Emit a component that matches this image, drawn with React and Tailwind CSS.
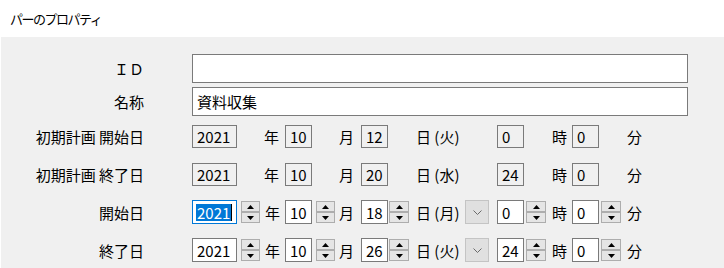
import React from "react";

const FONT = "font-['Noto_Sans_CJK_JP','Noto_Sans',sans-serif]";

function Box({ value, w }) {
  return (
    <div className={`${w} h-[23px] shrink-0 border border-[#7a7a7a] bg-[#f0f0f0] flex items-center pl-[4px] text-[15px] leading-none text-black`}>
      {value}
    </div>
  );
}

function Input({ value, w, focused }) {
  return (
    <div
      className={`${w} h-[24px] shrink-0 border ${
        focused ? "border-[#0078d7]" : "border-[#7a7a7a]"
      } bg-white flex items-center pl-[3px] text-[15px] leading-none text-black`}
    >
      {focused ? (
        <span className="flex items-center">
          <span className="bg-[#0078d7] text-white h-[17px] flex items-center px-[1px]">{value}</span>
          <span className="w-[1px] h-[17px] bg-black" />
        </span>
      ) : (
        <span className="pl-[1px]">{value}</span>
      )}
    </div>
  );
}

function Spinner({ className = "" }) {
  return (
    <div className={`flex flex-col w-[19px] h-[22px] shrink-0 ${className}`}>
      <div className="h-[11px] bg-[#e5e5e5] border border-[#adadad] flex items-center justify-center">
        <svg width="7" height="4" viewBox="0 0 7 4">
          <path d="M0 4 L3.5 0 L7 4 Z" fill="#000" />
        </svg>
      </div>
      <div className="h-[11px] bg-[#e5e5e5] border border-[#adadad] flex items-center justify-center">
        <svg width="7" height="4" viewBox="0 0 7 4">
          <path d="M0 0 L3.5 4 L7 0 Z" fill="#000" />
        </svg>
      </div>
    </div>
  );
}

function Dropdown() {
  return (
    <div className="w-[24px] h-[24px] shrink-0 bg-[#e0e0e0] border border-[#c4c4c4] flex items-center justify-center">
      <svg width="9" height="5" viewBox="0 0 9 5">
        <path d="M0.5 0.5 L4.5 4.5 L8.5 0.5" fill="none" stroke="#6a6a6a" strokeWidth="1" />
      </svg>
    </div>
  );
}

function Label({ children }) {
  return (
    <div className="w-[143px] shrink-0 text-right text-[15px] leading-none text-black whitespace-nowrap">
      {children}
    </div>
  );
}

function T({ children, cls }) {
  return (
    <div className={`${cls} shrink-0 text-[15px] leading-none text-black whitespace-nowrap`}>{children}</div>
  );
}

function PlanRow({ label, y, m, d, dow, h, mi }) {
  return (
    <div className="h-[24px] flex items-center">
      <Label>{label}</Label>
      <div className="ml-[48px] flex items-center">
        <Box value={y} w="w-[45px]" />
        <T cls="w-[48px] pl-[27px]">年</T>
        <Box value={m} w="w-[27px]" />
        <T cls="w-[49px] pl-[27px]">月</T>
        <Box value={d} w="w-[27px]" />
        <T cls="w-[109px] pl-[28px]">日 ({dow})</T>
        <Box value={h} w="w-[27px]" />
        <T cls="w-[48px] pl-[28px]">時</T>
        <Box value={mi} w="w-[27px]" />
        <T cls="pl-[28px]">分</T>
      </div>
    </div>
  );
}

function EditRow({ label, y, m, d, dow, h, mi, focused }) {
  return (
    <div className="h-[24px] flex items-center">
      <Label>{label}</Label>
      <div className="ml-[48px] flex items-center">
        <Input value={y} w="w-[45px]" focused={focused} />
        <Spinner className="ml-[4px]" />
        <T cls="w-[25px] pl-[5px]">年</T>
        <Input value={m} w="w-[27px]" />
        <Spinner className="ml-[4px]" />
        <T cls="w-[26px] pl-[4px]">月</T>
        <Input value={d} w="w-[27px]" />
        <Spinner className="ml-[1px] w-[20px]" />
        <T cls="w-[56px] pl-[7px]">日 ({dow})</T>
        <Dropdown />
        <div className="ml-[8px]" />
        <Input value={h} w="w-[27px]" />
        <Spinner className="ml-[2px] w-[20px]" />
        <T cls="w-[26px] pl-[6px]">時</T>
        <Input value={mi} w="w-[27px]" />
        <Spinner className="ml-[2px] w-[20px]" />
        <T cls="pl-[6px]">分</T>
      </div>
    </div>
  );
}

export default function App() {
  return (
    <div className={`w-[724px] h-[268px] overflow-hidden bg-white ${FONT}`}>
      <div className="h-[37px] flex items-center pl-[10px] text-[13px] tracking-[-1.5px] text-black">
        パーのプロパティ
      </div>
      <div className="h-[231px] ml-[1px] bg-[#f0f0f0] pt-[17px]">
        <div className="h-[29px] flex items-center">
          <Label>ＩＤ</Label>
          <div className="ml-[48px] w-[496px] h-[29px] border border-[#7a7a7a] bg-white" />
        </div>
        <div className="mt-[4px] h-[29px] flex items-center">
          <Label>名称</Label>
          <div className="ml-[48px] w-[496px] h-[29px] border border-[#7a7a7a] bg-white flex items-center pl-[4px] text-[15px] leading-none text-black">
            資料収集
          </div>
        </div>
        <div className="mt-[8px] flex flex-col gap-[14px]">
          <PlanRow label="初期計画 開始日" y="2021" m="10" d="12" dow="火" h="0" mi="0" />
          <PlanRow label="初期計画 終了日" y="2021" m="10" d="20" dow="水" h="24" mi="0" />
          <EditRow label="開始日" y="2021" m="10" d="18" dow="月" h="0" mi="0" focused />
          <EditRow label="終了日" y="2021" m="10" d="26" dow="火" h="24" mi="0" />
        </div>
      </div>
    </div>
  );
}
